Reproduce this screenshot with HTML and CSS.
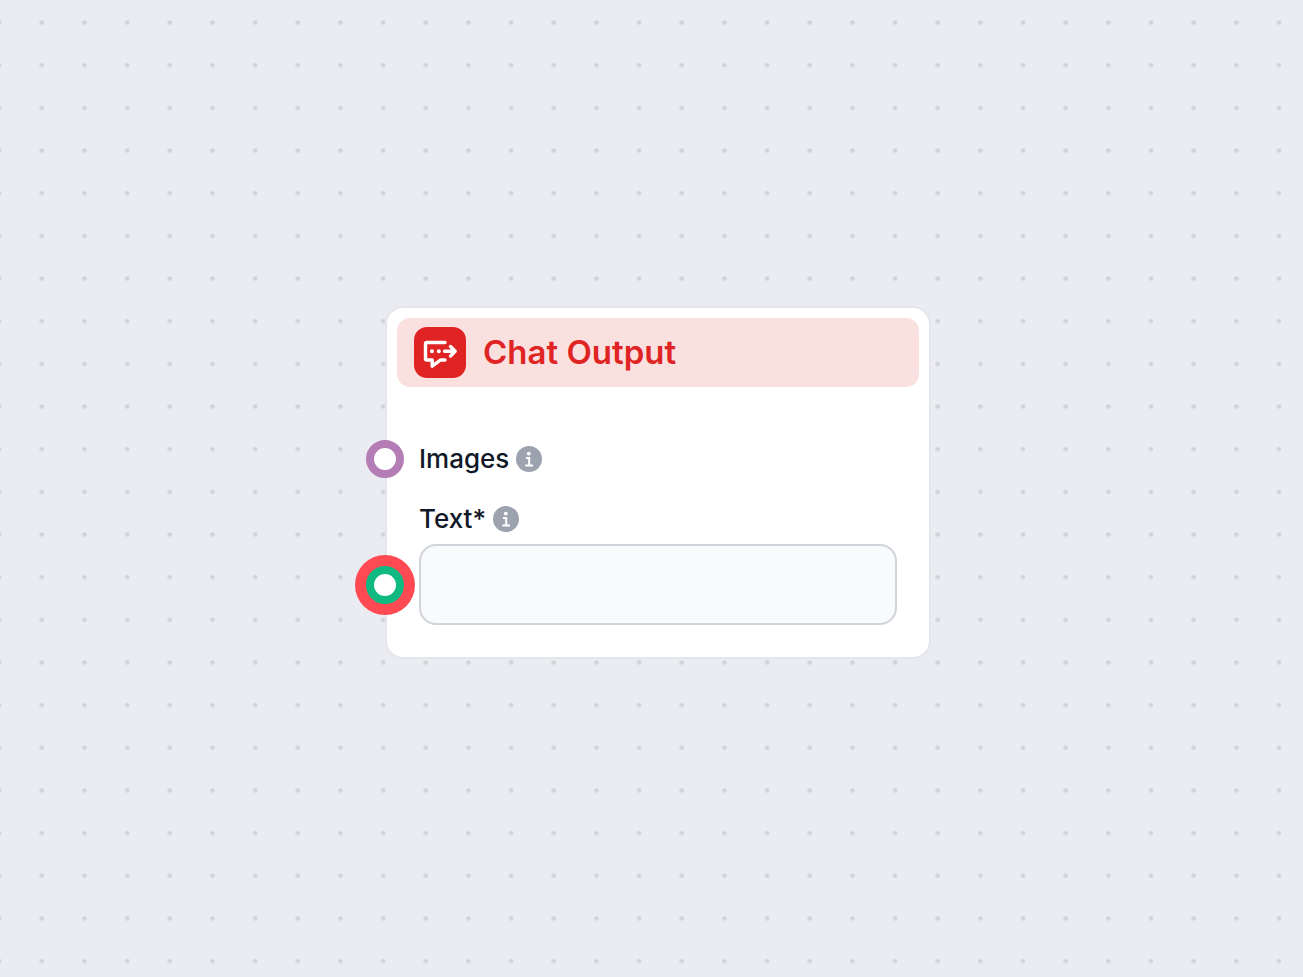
FILE: index.html
```
<!DOCTYPE html>
<html lang="en">
<head>
  <meta charset="UTF-8">
  <meta name="viewport" content="width=device-width, initial-scale=1.0">
  <title>Chat Output</title>
  <link rel="stylesheet" href="styles.css">
</head>
<body>
  <main class="canvas">
    <svg class="grid" aria-hidden="true">
      <defs>
        <pattern id="dots" width="20" height="20" patternUnits="userSpaceOnUse" patternTransform="translate(20.5 1.2) scale(2.133)">
          <circle cx="10" cy="10" r="1.1" fill="#d1d3d9"/>
        </pattern>
      </defs>
      <rect width="100%" height="100%" fill="url(#dots)"/>
    </svg>

    <section class="node">
      <header class="node-header">
        <span class="node-icon">
          <svg viewBox="0 0 52 51" fill="none" stroke="#fff" stroke-width="3.4" stroke-linecap="round" stroke-linejoin="round" aria-hidden="true">
            <path d="M31 15.5H13Q11.500 15.500 11.500 17V31.500Q11.500 33 13 33H18.200V39.200L26.500 33H31"/>
            <path d="M30.500 24.200H41M36.500 19.500L41.200 24.200L36.500 29"/>
            <g fill="#fff" stroke="none">
              <circle cx="18" cy="24.200" r="2"/>
              <circle cx="24.800" cy="24.200" r="2"/>
            </g>
          </svg>
        </span>
        <h1>Chat Output</h1>
      </header>

      <div class="node-body">
        <div class="field">
          <button class="handle handle-images" type="button" aria-label="Connect images"></button>
          <div class="field-label">
            <span>Images</span>
            <svg class="info" viewBox="0 0 26 26" aria-hidden="true">
              <circle cx="13" cy="13" r="13" fill="#9ca3af"/>
              <circle cx="12.800" cy="7.600" r="1.900" fill="#fff"/>
              <path d="M10 12H13.200V19M9.300 19.400H17" fill="none" stroke="#fff" stroke-width="2"/>
            </svg>
          </div>
        </div>

        <div class="field">
          <div class="field-label">
            <label for="text-input">Text*</label>
            <svg class="info" viewBox="0 0 26 26" aria-hidden="true">
              <circle cx="13" cy="13" r="13" fill="#9ca3af"/>
              <circle cx="12.800" cy="7.600" r="1.900" fill="#fff"/>
              <path d="M10 12H13.200V19M9.300 19.400H17" fill="none" stroke="#fff" stroke-width="2"/>
            </svg>
          </div>
          <div class="field-control">
            <button class="handle handle-text" type="button" aria-label="Connect text"></button>
            <input id="text-input" type="text">
          </div>
        </div>
      </div>
    </section>
  </main>
</body>
</html>
```
FILE: styles.css
```
* {
  box-sizing: border-box;
}
body {
  margin: 0;
  font-family: Inter, sans-serif;
  background-color: #ebecf1;
  color: #111827;
}
.canvas {
  position: relative;
  min-height: 100vh;
  overflow: hidden;
}
.grid {
  position: absolute;
  inset: 0;
  width: 100%;
  height: 100%;
}
.node {
  position: absolute;
  left: 385px;
  top: 306px;
  width: 546px;
  padding: 10px;
  background-color: #fff;
  border: 2px solid #e5e6eb;
  border-radius: 18px;
}
.node-header {
  display: flex;
  align-items: center;
  gap: 17px;
  padding: 9px 17px;
  background-color: #fbe0e0;
  border-radius: 13px;
}
.node-icon {
  display: flex;
  width: 52px;
  height: 51px;
  background-color: #e02424;
  border-radius: 13px;
}
h1 {
  margin: 0;
  font-size: 33px;
  line-height: 51px;
  font-weight: 600;
  color: #e02424;
}
.node-body {
  display: flex;
  flex-direction: column;
  gap: 22px;
  padding: 53px 22px 22px;
}
.field {
  position: relative;
}
.field-label {
  display: flex;
  align-items: center;
  gap: 7px;
  font-size: 26px;
  line-height: 38px;
  font-weight: 500;
}
.info {
  width: 26px;
  height: 26px;
}
.field-control {
  position: relative;
  display: flex;
  margin-top: 6px;
}
input {
  width: 100%;
  height: 81px;
  padding: 16px;
  font: inherit;
  font-size: 26px;
  background-color: #f9fafb;
  border: 2px solid #d1d5db;
  border-radius: 17px;
}
.handle {
  position: absolute;
  left: -53px;
  top: 50%;
  width: 38px;
  height: 38px;
  padding: 0;
  background-color: #fff;
  border: 8px solid;
  border-radius: 50%;
  transform: translateY(-50%);
}
.handle-images {
  border-color: #b57db5;
}
.handle-text {
  border-color: #10b981;
  box-shadow: 0 0 0 11px #ff4a53;
}
```
